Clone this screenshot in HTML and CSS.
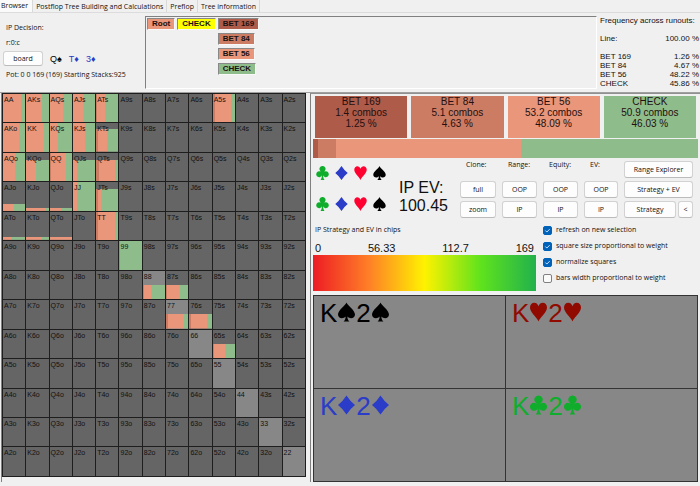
FILE: index.html
```html
<!DOCTYPE html>
<html lang="en">
<head>
<meta charset="utf-8">
<title>Browser</title>
<link rel="stylesheet" href="styles.css">
</head>
<body>
<svg class="sprite" aria-hidden="true">
  <symbol id="spade" viewBox="0 0 16 18"><path d="M8 0C7 3 0 7 0 11.400C0 15 4.800 16 7.200 13.200C7.100 15.500 6.400 17 5.200 18H10.800C9.600 17 8.900 15.500 8.800 13.200C11.200 16 16 15 16 11.400C16 7 9 3 8 0Z"/></symbol>
  <symbol id="heart" viewBox="0 0 16 18"><path d="M8 18C7 14.500 0 9.500 0 4.800C0 -.6 6.500 -1.400 8 3.600C9.500 -1.400 16 -.6 16 4.800C16 9.500 9 14.500 8 18Z"/></symbol>
  <symbol id="diamond" viewBox="0 0 16 18"><path d="M8 0Q11.500 5.500 16 9Q11.500 12.500 8 18Q4.500 12.500 0 9Q4.500 5.500 8 0Z"/></symbol>
  <symbol id="club" viewBox="0 0 16 18"><path d="M8 0A3.800 3.800 0 0 1 10.700 6.600Q10 7.400 9.300 8.300A3.800 3.800 0 1 1 8.700 12Q8.800 16 10.500 18H5.500Q7.200 16 7.300 12A3.800 3.800 0 1 1 6.700 8.300Q6 7.400 5.300 6.600A3.800 3.800 0 0 1 8 0Z"/></symbol>
</svg>

<nav class="tabs">
  <a class="tab active" href="#browser">Browser</a>
  <a class="tab" href="#postflop">Postflop Tree Building and Calculations</a>
  <a class="tab" href="#preflop">Preflop</a>
  <a class="tab" href="#tree">Tree information</a>
</nav>

<header class="top">
  <section class="decision">
    <p>IP Decision:</p>
    <p>r:0:c</p>
    <div class="board">
      <button type="button" class="btn">board</button>
      <span class="card-name">Q♠</span><span class="card-name blue">T♦</span><span class="card-name blue">3♦</span>
    </div>
    <p class="pot">Pot: 0 0 169 (169) Starting Stacks:925</p>
  </section>
  <section class="line">
    <div class="step"><button type="button" class="action bet56">Root</button></div>
    <div class="step"><button type="button" class="action chosen">CHECK</button></div>
    <div class="step">
      <button type="button" class="action bet169">BET 169</button>
      <button type="button" class="action bet84">BET 84</button>
      <button type="button" class="action bet56">BET 56</button>
      <button type="button" class="action check">CHECK</button>
    </div>
  </section>
  <table class="freq">
    <caption>Frequency across runouts:</caption>
    <tbody>
      <tr class="total"><th scope="row">Line:</th><td>100.00 %</td></tr>
      <tr><th scope="row">BET 169</th><td>1.26 %</td></tr>
      <tr><th scope="row">BET 84</th><td>4.67 %</td></tr>
      <tr><th scope="row">BET 56</th><td>48.22 %</td></tr>
      <tr><th scope="row">CHECK</th><td>45.86 %</td></tr>
    </tbody>
  </table>
</header>

<main class="main">
  <section class="range"><table class="matrix"><tbody id="matrix"></tbody></table></section>

  <section class="detail">
    <div class="summary">
      <div class="stat bet169">BET 169<br>1.4 combos<br>1.25 %</div>
      <div class="stat bet84">BET 84<br>5.1 combos<br>4.63 %</div>
      <div class="stat bet56">BET 56<br>53.2 combos<br>48.09 %</div>
      <div class="stat check">CHECK<br>50.9 combos<br>46.03 %</div>
    </div>
    <div class="split">
      <span class="bet169" style="width:1.25%"></span><span class="bet84" style="width:4.63%"></span><span class="bet56" style="width:48.09%"></span><span class="check rest"></span>
    </div>

    <div class="controls">
      <div class="suits">
        <svg class="suit club"><use href="#club"/></svg><svg class="suit diamond"><use href="#diamond"/></svg><svg class="suit heart"><use href="#heart"/></svg><svg class="suit"><use href="#spade"/></svg>
        <svg class="suit club"><use href="#club"/></svg><svg class="suit diamond"><use href="#diamond"/></svg><svg class="suit heart"><use href="#heart"/></svg><svg class="suit"><use href="#spade"/></svg>
      </div>
      <p class="ev">IP EV:<br>100.45</p>
      <div class="pad">
        <span class="head">Clone:</span><span class="head">Range:</span><span class="head">Equity:</span><span class="head">EV:</span>
        <button type="button" class="btn wide">Range Explorer</button>
        <button type="button" class="btn">full</button><button type="button" class="btn">OOP</button><button type="button" class="btn">OOP</button><button type="button" class="btn">OOP</button>
        <button type="button" class="btn wide">Strategy + EV</button>
        <button type="button" class="btn">zoom</button><button type="button" class="btn">IP</button><button type="button" class="btn">IP</button><button type="button" class="btn">IP</button>
        <div class="wide pair-row"><button type="button" class="btn">Strategy</button><button type="button" class="btn">&lt;</button></div>
      </div>
    </div>

    <div class="lower">
      <div class="scale">
        <p>IP Strategy and EV in chips</p>
        <div class="ticks"><span>0</span><span>56.33</span><span>112.7</span><span>169</span></div>
        <div class="gradient"></div>
      </div>
      <div class="options">
        <label><input type="checkbox" checked>refresh on new selection</label>
        <label><input type="checkbox" checked>square size proportional to weight</label>
        <label><input type="checkbox" checked>normalize squares</label>
        <label><input type="checkbox">bars width proportional to weight</label>
      </div>
    </div>

    <div class="hands">
      <div class="hand spade">K<svg class="pip"><use href="#spade"/></svg>2<svg class="pip"><use href="#spade"/></svg></div>
      <div class="hand darkheart">K<svg class="pip"><use href="#heart"/></svg>2<svg class="pip"><use href="#heart"/></svg></div>
      <div class="hand diamond">K<svg class="pip"><use href="#diamond"/></svg>2<svg class="pip"><use href="#diamond"/></svg></div>
      <div class="hand club">K<svg class="pip"><use href="#club"/></svg>2<svg class="pip"><use href="#club"/></svg></div>
    </div>
  </section>
</main>
<script src="matrix.js"></script>
</body>
</html>
```
FILE: styles.css
```css
* { box-sizing: border-box; }
body {
  margin: 0;
  min-height: 100vh;
  display: flex;
  flex-direction: column;
  background: #f0f0f0;
  color: #111;
  font: 7px/12px "Open Sans", "Liberation Sans", sans-serif;
}
p { margin: 0; }
button, input { font: inherit; color: inherit; margin: 0; }
.sprite { display: none; }

.bet169 { background: #ae5b4a; }
.bet84 { background: #cd7c64; }
.bet56 { background: #e9967a; }
.check { background: #8fbc8b; }
.chosen { background: #ff0; }
.club { color: #10ad2c; }
.diamond, .blue { color: #2a3cc8; }
.heart { color: #ff0030; }
.darkheart { color: #900a00; }
.spade { color: #000; }

.tabs { display: flex; height: 13px; border-bottom: 1px solid #dcdcdc; }
.tab { padding: 0 3px; color: #111; text-decoration: none; line-height: 13px; border-right: 1px solid #d9d9d9; }
.tab.active { padding: 0 4px 0 1px; background: #fafafa; line-height: 12px; }

.top {
  display: grid;
  grid-template-columns: 142px 1fr 100px;
  gap: 3px;
  min-height: 80px;
  padding: 3px 0;
  border-bottom: 1px solid #a0a0a0;
}
.decision { padding: 4px 0 0 3px; }
.decision p { padding-left: 3px; line-height: 15px; }
.board { display: flex; gap: 7px; align-items: center; height: 17px; }
.board .btn { width: 40px; height: 15px; }
.card-name { font: 9px/12px "Liberation Sans", "DejaVu Sans", sans-serif; }
.card-name:not(.blue) { color: #000; }
.btn {
  padding: 0;
  background: #fdfdfd;
  border: 1px solid #d2d2d2;
  border-bottom-color: #bbb;
  border-radius: 3px;
  line-height: 12px;
  white-space: nowrap;
}
.line {
  display: flex;
  align-items: flex-start;
  gap: 2px;
  padding: 1px;
  border: 1px solid #fff;
  border-top-color: #808080;
  border-left-color: #808080;
}
.step { display: flex; flex-direction: column; align-items: flex-start; gap: 3px; }
.action {
  padding: 0 4px;
  border: 1px solid #f8f8f8;
  border-top-color: #888;
  border-left-color: #888;
  color: #1c1010;
  font: bold 8px/10px "Liberation Sans", sans-serif;
}
.freq { width: 100%; border-collapse: collapse; font: 8px/9px "Liberation Sans", sans-serif; align-self: start; }
.freq caption { text-align: left; white-space: nowrap; padding-bottom: 9px; }
.freq th { font-weight: normal; text-align: left; padding: 0; }
.freq td { text-align: right; padding: 0 1px 0 0; }
.freq .total > * { padding-bottom: 9px; }

.main {
  flex: 1;
  display: grid;
  grid-template-columns: 305fr 390fr;
  gap: 4px;
  padding: 0 0 4px 1px;
}
.range { display: flex; padding: 0 0 5px; border-left: 1px solid #808080; }
.matrix { width: 100%; table-layout: fixed; border-collapse: collapse; }
.matrix td {
  padding: 2px 0 0 1px;
  border: 1px solid #1e1e1e;
  vertical-align: top;
  color: #111;
  font: 7px/8px "Liberation Sans", sans-serif;
  background-color: #656565;
  background-repeat: no-repeat;
  background-position: left bottom;
  background-size: 100% var(--h, 0);
  background-image: linear-gradient(to right, #cd7c64 var(--a, 0), #e9967a var(--a, 0) var(--b, 0), #8fbc8b var(--b, 0));
}
.matrix td.pair { background-color: #878787; }

.detail { display: flex; flex-direction: column; padding: 2px 2px 0; border-left: 1px solid #808080; border-top: 1px solid #909090; }
.summary { display: grid; grid-template-columns: repeat(4, 1fr); gap: 4px; padding: 0 2px; }
.stat { height: 42px; text-align: center; font: 10px/11px "Liberation Sans", sans-serif; color: #241010; }
.split { display: flex; height: 19px; margin-top: 1px; }
.split .rest { flex: 1; }

.controls { display: flex; padding: 3px 5px 0 3px; height: 64px; }
.suits { display: grid; grid-template-columns: repeat(4, 13px); gap: 17px 6px; align-content: start; padding-top: 5px; color: #000; }
.suit { width: 13px; height: 14px; fill: currentColor; }
.ev { margin-left: 13px; padding-top: 18px; font: 16px/18px "Liberation Sans", sans-serif; color: #111; }
.pad {
  margin-left: auto;
  display: grid;
  grid-template-columns: 36px 35px 35px 34px 69px;
  grid-auto-rows: 17px;
  gap: 3px 6px;
  align-content: start;
}
.pad .head { padding-left: 6px; line-height: 8px; }
.pair-row { display: grid; grid-template-columns: 1fr 15px; gap: 2px; }

.lower { display: flex; justify-content: space-between; padding: 2px 43px 4px 0; }
.scale { flex: 0 0 223px; }
.scale p { padding-left: 2px; }
.ticks { display: flex; justify-content: space-between; padding: 5px 2px 0; font: 11px/14px "Liberation Sans", sans-serif; }
.gradient { height: 36px; background: linear-gradient(to right, #ed1c24, #ff7f27 25%, #fff200 50%, #60e31c 75%, #22b14c); }
.options { display: flex; flex-direction: column; gap: 4px; width: 112px; }
.options label { display: flex; align-items: center; gap: 4px; white-space: nowrap; }
.options input {
  appearance: none;
  flex: none;
  width: 9px;
  height: 9px;
  border: 1px solid #808080;
  border-radius: 2px;
  background: #fafafa;
}
.options input:checked {
  border-color: #0062b8;
  background: #0062b8 url("data:image/svg+xml,%3Csvg xmlns='http://www.w3.org/2000/svg' viewBox='0 0 8 8'%3E%3Cpath d='M1.500 4L3.300 5.800L6.500 2.400' fill='none' stroke='white' stroke-width='.9'/%3E%3C/svg%3E") center / 100%;
}

.hands {
  flex: 1;
  display: grid;
  grid-template-columns: 1fr 1fr;
  grid-auto-rows: 1fr;
  gap: 1px;
  border: 1px solid #333;
  background: #333;
}
.hand { background: #878787; padding: 2px 6px; font: 26px/30px "Liberation Sans", sans-serif; }
.pip { width: 17px; height: 20px; margin: 0 1px; fill: currentColor; vertical-align: baseline; }
```
FILE: matrix.js
```js
// Each hand: [height, end of the bet 84 share, end of the bet 56 share], in percent.
const weights = {
  AA: [100, 0, 80], AKs: [100, 0, 70], AQs: [100, 0, 57], AJs: [100, 0, 47], ATs: [100, 4, 42],
  A5s: [100, 9, 80], AKo: [100, 0, 73], KK: [100, 0, 77], KQs: [100, 0, 36], KJs: [100, 0, 53],
  KTs: [78, 8, 52], AQo: [100, 0, 53], KQo: [78, 0, 42], QQ: [100, 6, 73], QJs: [78, 0, 20],
  QTs: [78, 12, 88], AJo: [24, 0, 50], KJo: [10, 0, 88], QJo: [10, 0, 50], JJ: [100, 0, 20],
  JTs: [76, 8, 25], ATo: [10, 0, 35], KTo: [10, 0, 68], QTo: [10, 0, 100], TT: [100, 10, 86],
  99: [100, 3, 3], 88: [50, 5, 38], "87s": [50, 5, 65], 77: [50, 8, 80], "76s": [50, 8, 77],
  "65s": [50, 6, 55]
};
const ranks = "AKQJT98765432";
const body = document.getElementById("matrix");

for (let r = 0; r < 13; r++) {
  const row = body.insertRow();
  for (let c = 0; c < 13; c++) {
    const hand = r === c ? ranks[r] + ranks[c]
      : c > r ? ranks[r] + ranks[c] + "s"
      : ranks[c] + ranks[r] + "o";
    const cell = row.insertCell();
    cell.textContent = hand;
    if (r === c) cell.className = "pair";
    const w = weights[hand];
    if (w) {
      cell.style.setProperty("--h", w[0] + "%");
      cell.style.setProperty("--a", w[1] + "%");
      cell.style.setProperty("--b", w[2] + "%");
    }
  }
}
```
